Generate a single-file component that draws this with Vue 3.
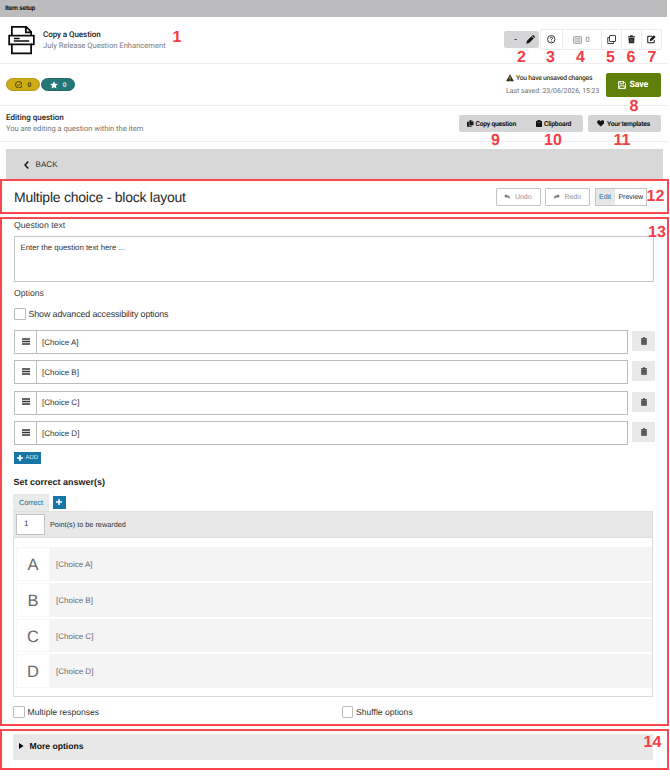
<script setup>
import { ref } from 'vue'

const choices = ref(['A', 'B', 'C', 'D'])
const points = ref('1')

const regions = [
  { top: 179, height: 35 },
  { top: 217, height: 509 },
  { top: 729, height: 41 }
]

const markers = [
  { n: 1, x: 177, y: 37.5 },
  { n: 2, x: 521.5, y: 58 },
  { n: 3, x: 550.5, y: 58 },
  { n: 4, x: 580.5, y: 58 },
  { n: 5, x: 610.5, y: 58 },
  { n: 6, x: 631, y: 58 },
  { n: 7, x: 652, y: 58 },
  { n: 8, x: 634, y: 106.5 },
  { n: 9, x: 495.5, y: 140.5 },
  { n: 10, x: 553, y: 141 },
  { n: 11, x: 622, y: 141 },
  { n: 12, x: 655.5, y: 197 },
  { n: 13, x: 657, y: 233 },
  { n: 14, x: 652.5, y: 743 }
]
</script>

<template>
  <div class="page">
    <div class="topbar">Item setup</div>

    <header class="item-row">
      <svg class="printer" viewBox="0 0 28 30" fill="none" stroke="#0b0b0b" stroke-width="1.8">
        <path d="M4 10V1.5h15l5 5V10M18.5 1.5V7H24" />
        <path d="M4 19.5H1.2V10.4h25.6v9.100H24" />
        <path d="M3.200 19.500h21.600M4 19.500v9.300h20v-9.300" />
        <path d="M6 13.400h6M6 16h16" stroke-width="1.500" />
      </svg>
      <div class="titles">
        <div class="t1">Copy a Question</div>
        <div class="t2">July Release Question Enhancement</div>
      </div>
      <div class="status-btn">
        <span>-</span>
        <svg width="9" height="9" viewBox="0 0 16 16" fill="#151515">
          <path d="M0.500 15.500l1.100-5L9.800 2.300l3.900 3.900-8.200 8.200zM10.800 1.300l1-1q.8-.6 1.600 0l2.300 2.300q.6.8 0 1.600l-1 1z" />
        </svg>
      </div>
      <div class="tools">
        <div class="tool w21">
          <svg width="8.500" height="8.500" viewBox="0 0 16 16" fill="none" stroke="#222" stroke-width="1.700">
            <circle cx="8" cy="8" r="7" />
            <path d="M5.700 6.500q.2-2.300 2.400-2.300 2.200.1 2.200 2 0 1.200-1.200 1.800Q8 8.500 8 9.700M8 10.900v1.700" />
          </svg>
        </div>
        <div class="tool w39 muted">
          <svg width="9" height="8" viewBox="0 0 18 16">
            <rect x="1" y="1" width="16" height="14" rx="1.500" fill="#ddd" stroke="#999" stroke-width="1.600" />
            <path d="M4 5h1.500M4 8h1.500M4 11h1.500M7 5h7M7 8h7M7 11h7" stroke="#999" stroke-width="1.200" />
          </svg>
          <span>0</span>
        </div>
        <div class="tool w21">
          <svg width="9" height="9" viewBox="0 0 18 18" fill="none" stroke="#222" stroke-width="1.700">
            <rect x="5" y="1" width="12" height="12" rx="1" />
            <path d="M5 5H1.500v12H13v-4" />
          </svg>
        </div>
        <div class="tool w20">
          <svg width="7" height="8.500" viewBox="0 0 14 16" fill="#222">
            <path d="M0 2h4l1-1.800h4L10 2h4v2H0zM1 5h12l-.7 11H1.700z" />
            <path d="M4.500 7v7M7 7v7M9.500 7v7" stroke="#777" stroke-width=".9" />
          </svg>
        </div>
        <div class="tool w20">
          <svg width="9.500" height="8.500" viewBox="0 0 19 17">
            <path d="M11 2.500H1.500v13h13V10" fill="none" stroke="#1a1a1a" stroke-width="2" />
            <path d="M5.500 12l.7-4L13.800.7l3.500 3.300-7.600 7.400z" fill="#1a1a1a" />
          </svg>
        </div>
      </div>
    </header>

    <section class="save-row">
      <div class="pill gold">
        <svg width="7.500" height="7.500" viewBox="0 0 16 16" fill="none" stroke="#3d3305" stroke-width="1.800">
          <circle cx="8" cy="8" r="7" />
          <path d="M4.500 8.200L7 10.600l4.800-5" />
        </svg>
        <span>0</span>
      </div>
      <div class="pill teal">
        <svg width="8" height="8" viewBox="0 0 16 16" fill="#fff">
          <path d="M8 .3l2.300 5 5.500.6-4.100 3.700 1.200 5.500L8 12.300l-4.900 2.800 1.200-5.500L.2 5.900l5.500-.6z" />
        </svg>
        <span>0</span>
      </div>
      <div class="save-info">
        <div class="unsaved">
          <svg width="8" height="7.500" viewBox="0 0 16 15">
            <path d="M8 .5L15.800 14.500H.2z" fill="#332b0c" />
            <path d="M8 5v4.500M8 11v1.800" stroke="#fff" stroke-width="1.500" />
          </svg>
          <span>You have unsaved changes</span>
        </div>
        <div class="last">Last saved: 23/06/2026, 15:23</div>
      </div>
      <div class="save">
        <svg width="8" height="8" viewBox="0 0 16 16" fill="none" stroke="#fff" stroke-width="1.800">
          <path d="M1 1h10.500L15 4.500V15H1zM4 1v4.500h7V1M3.500 15V9.500h9V15" />
        </svg>
        <span>Save</span>
      </div>
    </section>

    <section class="edit-row">
      <div class="edit-titles">
        <div class="e1">Editing question</div>
        <div class="e2">You are editing a question within the item</div>
      </div>
      <div class="grey-group first">
        <svg width="6.500" height="7" viewBox="0 0 14 14" fill="#151515">
          <path d="M5 0h5v4h4v7H5zM11 0l3 3h-3zM0 3h4v9h6v2H0z" />
        </svg>
        <span class="lbl copy">Copy question</span>
        <svg width="6" height="7" viewBox="0 0 12 14" fill="#151515">
          <path d="M0 2h3V0h6v2h3v12H0z" />
          <path d="M3 5h6" stroke="#999" />
        </svg>
        <span class="lbl clip">Clipboard</span>
      </div>
      <div class="grey-group second">
        <svg width="7.500" height="6.500" viewBox="0 0 16 14" fill="#151515">
          <path d="M8 14L1.200 7.300C-1.300 4.500.6.300 4 .3 6 .3 7.300 1.400 8 2.800 8.700 1.400 10 .3 12 .3c3.400 0 5.300 4.200 2.800 7z" />
        </svg>
        <span class="lbl tmpl">Your templates</span>
      </div>
    </section>

    <div class="back">
      <svg width="5" height="8" viewBox="0 0 10 16" fill="none" stroke="#151515" stroke-width="3">
        <path d="M8.500 1.200L2.200 8l6.300 6.800" />
      </svg>
      <span>BACK</span>
    </div>

    <div class="title-row">
      <h1>Multiple choice - block layout</h1>
      <div class="hist undo">
        <svg width="6" height="5.500" viewBox="0 0 12 11" fill="#777">
          <path d="M5 0v2.500q6.500.2 6.500 4.500 0 2-1.500 4Q10.300 6 5 6v2.500L.3 4.200z" />
        </svg>
        <span>Undo</span>
      </div>
      <div class="hist">
        <svg width="6" height="5.500" viewBox="0 0 12 11" fill="#777">
          <path d="M7 0v2.500Q.5 2.700.5 7q0 2 1.500 4Q1.700 6 7 6v2.500l4.700-4.300z" />
        </svg>
        <span>Redo</span>
      </div>
      <div class="mode">
        <span class="edit">Edit</span>
        <span class="preview">Preview</span>
      </div>
    </div>

    <main class="form">
      <div class="label q">Question text</div>
      <div class="textarea">Enter the question text here ...</div>
      <div class="label o">Options</div>
      <div class="check adv"><i></i><span>Show advanced accessibility options</span></div>

      <div class="choices">
        <div v-for="c in choices" :key="c" class="choice">
          <div class="field">
            <div class="handle">
              <svg width="8" height="7" viewBox="0 0 8 7" stroke="#333" stroke-width="1.300">
                <path d="M0 1h8M0 3.500h8M0 6h8" />
              </svg>
            </div>
            <span>[Choice {{ c }}]</span>
          </div>
          <div class="del">
            <svg width="6" height="8" viewBox="0 0 12 16" fill="#444">
              <path d="M0 2.500h3.500L4.500.5h3l1 2H12v2H0zM.5 5.200h11V15.500H.5z" />
              <path d="M3.500 7v7M6 7v7M8.500 7v7" stroke="#999" stroke-width=".8" />
            </svg>
          </div>
        </div>
      </div>

      <div class="add">
        <svg width="6" height="6" viewBox="0 0 6 6" stroke="#fff" stroke-width="1.700"><path d="M3 0v6M0 3h6" /></svg>
        <span>ADD</span>
      </div>

      <h2>Set correct answer(s)</h2>
      <div class="tabs">
        <div class="tab">Correct</div>
        <div class="plus">
          <svg width="6" height="6" viewBox="0 0 6 6" stroke="#fff" stroke-width="1.500"><path d="M3 0v6M0 3h6" /></svg>
        </div>
      </div>
      <div class="points">
        <div class="num">{{ points }}</div>
        <span>Point(s) to be rewarded</span>
      </div>
      <div class="answers">
        <div v-for="c in choices" :key="c" class="answer">
          <div class="letter">{{ c }}</div>
          <div class="ans-text">[Choice {{ c }}]</div>
        </div>
      </div>

      <div class="checks">
        <div class="check multi"><i></i><span>Multiple responses</span></div>
        <div class="check"><i></i><span>Shuffle options</span></div>
      </div>
    </main>

    <div class="more">
      <svg width="4.500" height="6" viewBox="0 0 9 12"><path d="M0 0l9 6-9 6z" fill="#000" /></svg>
      <span>More options</span>
    </div>

    <div v-for="r in regions" :key="r.top" class="region" :style="{ top: r.top + 'px', height: r.height + 'px' }"></div>
    <div v-for="m in markers" :key="m.n" class="marker" :style="{ left: m.x + 'px', top: m.y + 'px' }">{{ m.n }}</div>
  </div>
</template>

<style>
body {
  background: #fff;
}
</style>

<style scoped>
.page {
  position: relative;
  width: 670px;
  height: 780px;
  overflow: hidden;
  background: #fff;
  font-family: "Liberation Sans", Arial, sans-serif;
  color: #333;
  text-rendering: geometricPrecision;
}
.page * {
  box-sizing: border-box;
}
svg {
  display: block;
  flex: none;
}
span,
.page div {
  white-space: nowrap;
}
.topbar,
.item-row,
.save-row,
.edit-row {
  font-family: Roboto, "Noto Sans", sans-serif;
}
.topbar {
  width: 667px;
  height: 17px;
  padding-left: 5px;
  background: #bcbcbe;
  color: #111;
  font-size: 6.6px;
  font-weight: 700;
  line-height: 17px;
  letter-spacing: -0.15px;
}
.item-row {
  display: flex;
  align-items: center;
  width: 667px;
  height: 47px;
  padding-left: 8px;
  border-bottom: 1px solid #ececec;
}
.printer {
  width: 27px;
  height: 30px;
  margin-top: -1px;
}
.titles {
  width: 468.500px;
  padding-left: 8px;
  line-height: 11px;
}
.t1 {
  color: #222;
  font-size: 8px;
  font-weight: 500;
  letter-spacing: -0.06px;
}
.t2 {
  color: #7b7b7b;
  font-size: 7.6px;
}
.status-btn {
  display: flex;
  align-items: center;
  width: 35px;
  height: 17px;
  padding-left: 10.500px;
  margin-right: 1.500px;
  margin-top: -1px;
  border-radius: 2px;
  background: #d5d5d7;
  font-size: 8px;
  font-weight: 700;
}
.status-btn svg {
  margin-left: 8.500px;
}
.tools {
  display: flex;
  height: 21px;
  margin-top: -1px;
  border: 1px solid #ebebeb;
  border-radius: 2px;
}
.tool {
  display: flex;
  align-items: center;
  justify-content: center;
  border-left: 1px solid #ececec;
}
.tool:first-child {
  border-left: 0;
}
.w20 {
  width: 20px;
}
.w21 {
  width: 20.500px;
}
.w39 {
  width: 39px;
}
.muted {
  gap: 3px;
  color: #777;
  font-size: 7.500px;
}
.save-row {
  display: flex;
  align-items: center;
  width: 667px;
  height: 42px;
  padding-left: 6px;
  border-bottom: 1px solid #ececec;
}
.pill {
  display: flex;
  align-items: center;
  justify-content: center;
  gap: 5px;
  width: 34px;
  height: 13px;
  margin-right: 1px;
  border: 1px solid #b6980f;
  border-radius: 7px;
  font-size: 6.5px;
  font-weight: 700;
}
.gold {
  background: #ccab17;
  color: #4b3e08;
}
.teal {
  border-color: #22696a;
  background: #287778;
  color: #d3e6e6;
}
.save-info {
  width: 99.500px;
  margin-left: 430px;
}
.unsaved {
  display: flex;
  align-items: center;
  gap: 2px;
  height: 13px;
  color: #403813;
  font-size: 6.8px;
  font-weight: 500;
}
.unsaved span {
  letter-spacing: -0.25px;
}
.last {
  height: 13px;
  color: #707070;
  font-size: 6.9px;
  line-height: 13px;
}
.save {
  display: flex;
  align-items: center;
  justify-content: center;
  gap: 3.500px;
  width: 55px;
  height: 24px;
  border-radius: 2px;
  background: #5f800b;
  color: #fff;
  font-size: 8.8px;
  font-weight: 700;
  letter-spacing: -0.2px;
}
.edit-row {
  display: flex;
  align-items: center;
  width: 667px;
  height: 36px;
  padding-left: 6px;
  border-bottom: 1px solid #ececec;
}
.edit-titles {
  width: 453px;
  line-height: 10.500px;
}
.e1 {
  color: #222;
  font-size: 8px;
  font-weight: 500;
}
.e2 {
  color: #777;
  font-size: 7.6px;
  letter-spacing: -0.04px;
}
.grey-group {
  display: flex;
  align-items: center;
  height: 17px;
  border-radius: 2px;
  background: #d5d5d7;
  color: #151515;
  font-size: 6.8px;
  font-weight: 700;
  letter-spacing: -0.25px;
}
.first {
  width: 124px;
  padding-left: 8px;
  margin-right: 5px;
}
.second {
  width: 73px;
  padding-left: 8.500px;
}
.lbl {
  padding-left: 2px;
}
.copy {
  width: 62.500px;
}
.tmpl {
  padding-left: 3px;
}
.back {
  display: flex;
  align-items: center;
  gap: 6.500px;
  width: 656.500px;
  height: 31px;
  margin: 7px 0 0 6px;
  padding-left: 18px;
  background: #d8d8d8;
  color: #333;
  font-size: 8.1px;
}
.title-row {
  display: flex;
  align-items: center;
  height: 34px;
  padding-left: 14px;
}
h1 {
  width: 481.500px;
  margin: 0;
  color: #2a2a2a;
  font-size: 14px;
  font-weight: 400;
  letter-spacing: -0.24px;
}
.hist,
.mode {
  display: flex;
  align-items: center;
  height: 18px;
  border: 1px solid #c4c4c4;
  font-size: 7px;
}
.hist {
  justify-content: center;
  gap: 4.500px;
  width: 45px;
  margin-right: 4.500px;
  border-radius: 1px;
  color: #8e8e8e;
}
.mode {
  width: 52.500px;
}
.edit {
  width: 19px;
  height: 16px;
  background: #e5e7e9;
  color: #226a8d;
  line-height: 17px;
  text-align: center;
}
.preview {
  padding-left: 4px;
  color: #222;
  font-size: 6.900px;
}
.form {
  padding-left: 14px;
}
.label {
  color: #3c3c3c;
  font-size: 8.7px;
}
.q {
  height: 22px;
  padding-top: 5.500px;
}
.textarea {
  width: 640px;
  height: 46px;
  padding: 6px 5.500px;
  border: 1px solid #c5c8ca;
  font-size: 7.8px;
}
.o {
  height: 26px;
  padding-top: 5.500px;
}
.check {
  display: flex;
  align-items: center;
  gap: 3px;
  height: 12px;
  font-size: 8.9px;
}
.adv span {
  letter-spacing: -0.12px;
}
.check i {
  width: 11.500px;
  height: 12px;
  border: 1px solid #bcbcbc;
  border-radius: 1px;
}
.choices {
  display: flex;
  flex-direction: column;
  gap: 6.400px;
  padding-top: 10px;
}
.choice {
  display: flex;
  gap: 4px;
  height: 24px;
}
.field {
  display: flex;
  align-items: center;
  width: 614px;
  height: 24px;
  border: 1px solid #bdbdbd;
  font-size: 8px;
}
.handle {
  display: flex;
  align-items: center;
  width: 22px;
  height: 100%;
  margin-right: 5px;
  padding: 0 0 2px 7px;
  border-right: 1px solid #bdbdbd;
}
.del {
  display: flex;
  align-items: center;
  justify-content: center;
  width: 23px;
  height: 20px;
  margin-top: 1px;
  background: #e9e9e9;
}
.add {
  display: flex;
  align-items: center;
  gap: 2.500px;
  width: 27px;
  height: 12px;
  margin-top: 6.800px;
  padding-left: 3px;
  background: #1876a6;
  color: #dcecf4;
  font-size: 6px;
}
.add span {
  padding-top: 1px;
}
h2 {
  height: 30px;
  margin: 0 0 0 -0.500px;
  padding-top: 13px;
  color: #222;
  font-size: 9px;
  font-weight: 700;
  line-height: 11px;
}
.tabs {
  display: flex;
  align-items: center;
  gap: 4px;
  margin-left: -1px;
}
.tab {
  width: 36px;
  height: 17px;
  background: #e9ebeb;
  color: #20678a;
  font-size: 7.4px;
  line-height: 18px;
  text-align: center;
}
.plus {
  display: flex;
  align-items: center;
  justify-content: center;
  width: 12.500px;
  height: 13px;
  background: #1876a6;
}
.points {
  display: flex;
  align-items: center;
  gap: 5.500px;
  width: 640px;
  height: 27px;
  margin-left: -1px;
  padding-left: 3px;
  border: 1px solid #dfdfdf;
  border-width: 1px 1px 1px 0;
  background: #e8e8e8;
  font-size: 7.3px;
}
.num {
  width: 28.500px;
  height: 21px;
  padding-left: 7px;
  border: 1px solid #c2c2c2;
  background: #fff;
  font-size: 8px;
  line-height: 18px;
}
.answers {
  display: flex;
  flex-direction: column;
  gap: 2px;
  width: 640px;
  height: 159px;
  margin-left: -1px;
  padding: 9.500px 0 0 2px;
  border: 1px solid #d9dcde;
  border-top: 0;
}
.answer {
  display: flex;
  width: 636px;
  height: 33.600px;
  background: #f4f4f4;
  color: #6a6a6a;
}
.letter {
  width: 34px;
  border: 1px solid #f7f7f7;
  background: #fff;
  font-size: 16.5px;
  line-height: 34px;
  text-align: center;
}
.ans-text {
  padding-left: 6px;
  font-size: 8px;
  line-height: 35px;
}
.checks {
  display: flex;
  margin: 9px 0 0 -1px;
}
.checks .check {
  font-size: 8.6px;
}
.multi {
  width: 328.500px;
}
.more {
  display: flex;
  align-items: center;
  gap: 6px;
  width: 640px;
  height: 26px;
  margin: 16px 0 0 13px;
  padding: 0 0 2px 6px;
  background: #e8e8e8;
  color: #111;
  font-size: 8.6px;
  font-weight: 700;
}
.region {
  position: absolute;
  left: 0;
  width: 669px;
  border: 2px solid #f9484f;
}
.marker {
  position: absolute;
  color: #f43d46;
  font-size: 16px;
  font-weight: 700;
  line-height: 16px;
  transform: translate(-50%, -50%);
}
</style>
